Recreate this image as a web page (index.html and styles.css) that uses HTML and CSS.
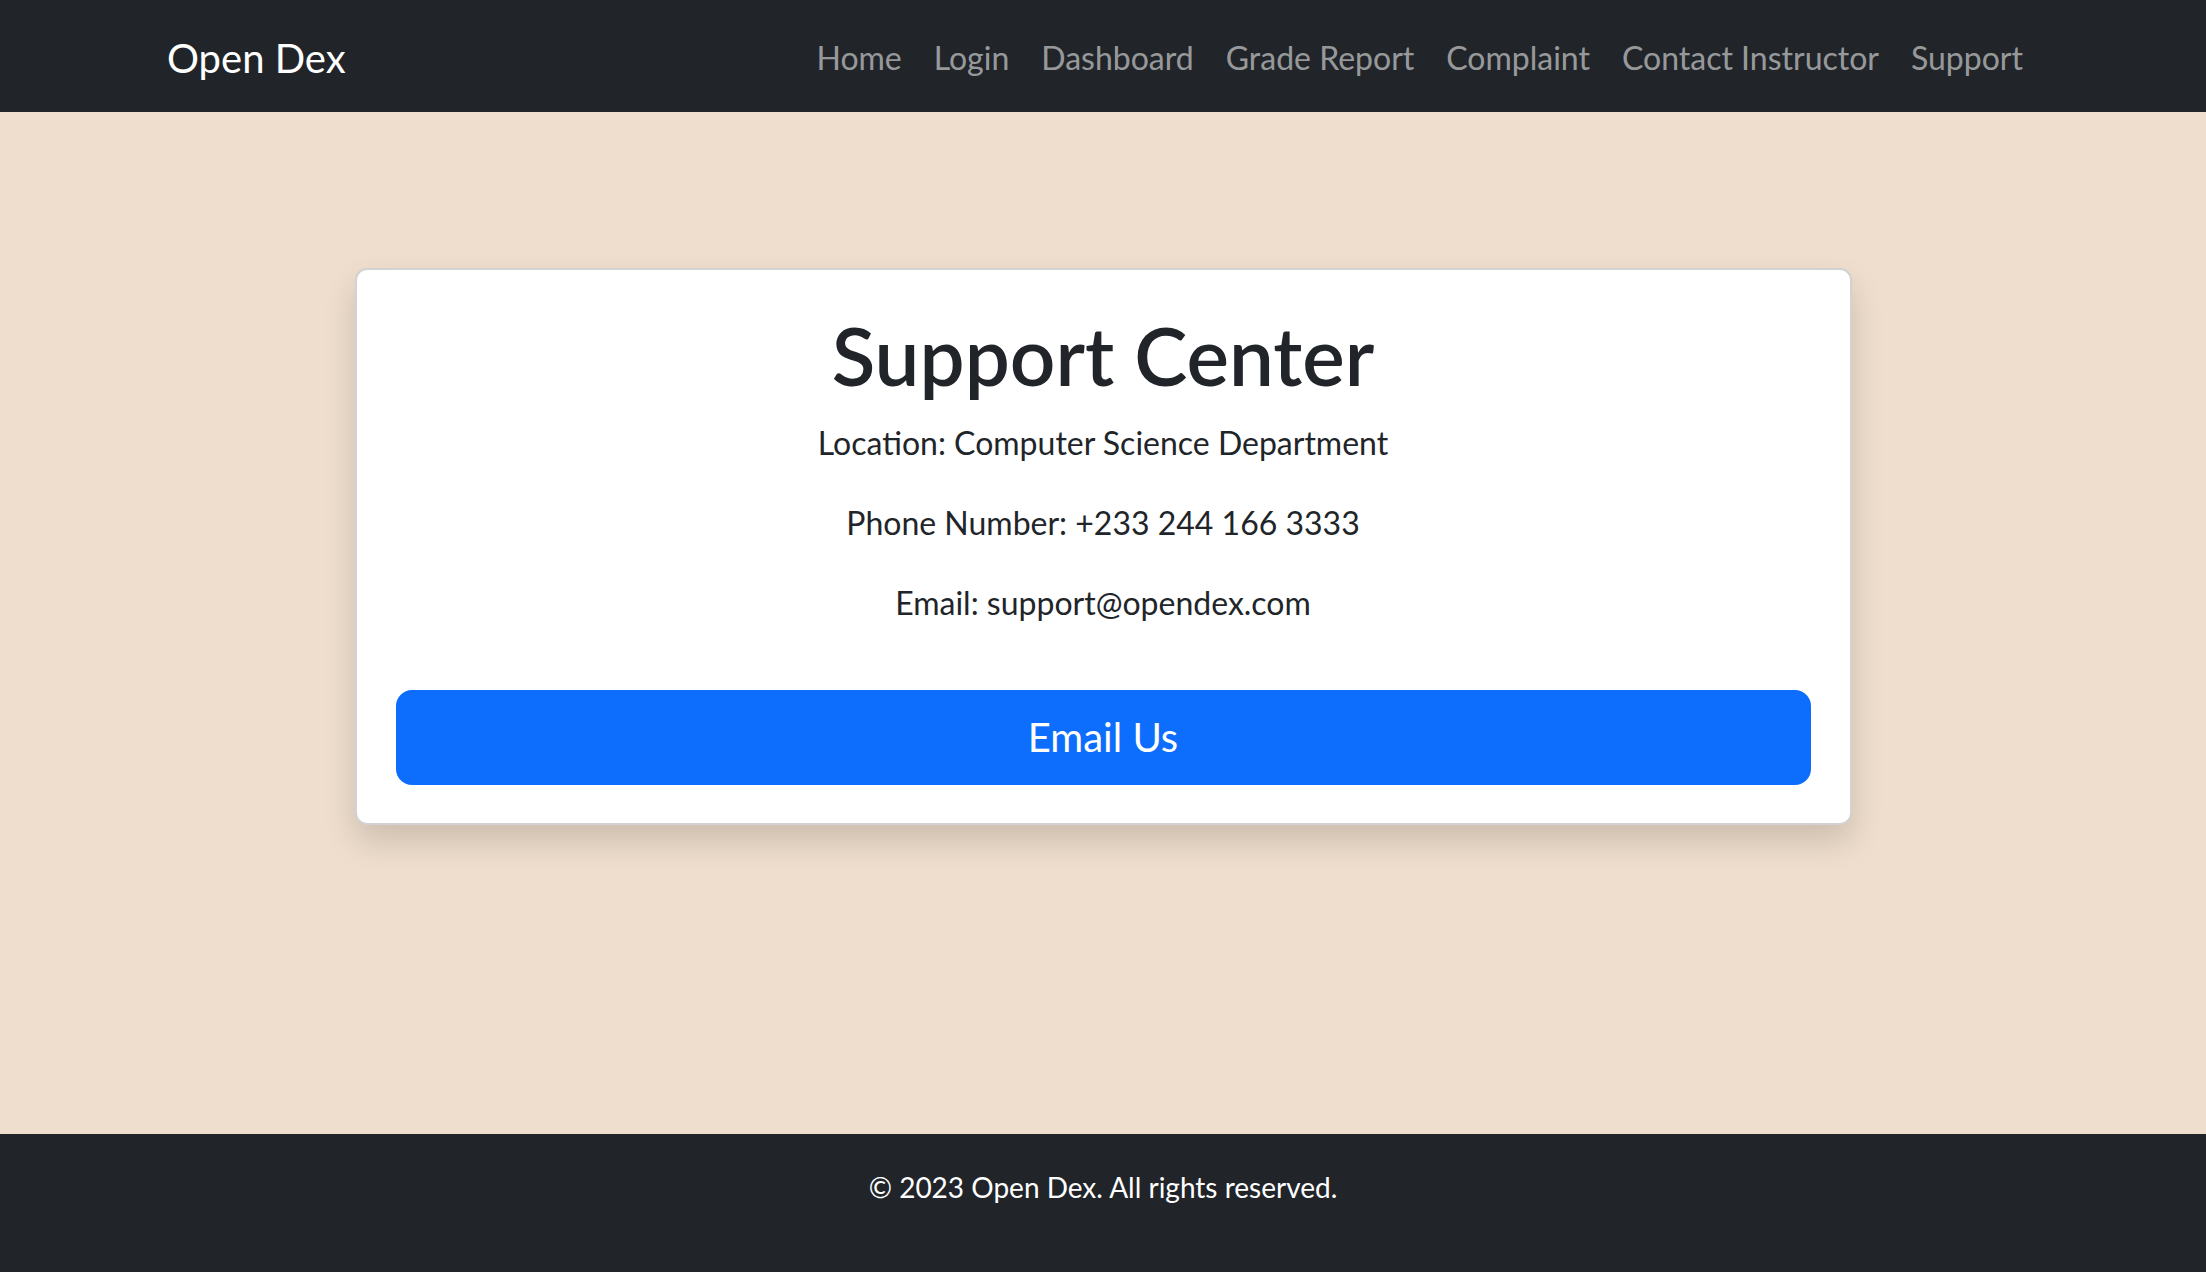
FILE: index.html
```html
<!DOCTYPE html>
<html lang="en">
<head>
<meta charset="utf-8">
<title>Support - Open Dex</title>
<link rel="stylesheet" href="styles.css">
</head>
<body>
<header class="navbar">
  <div class="nav-container">
    <a class="brand" href="#">Open Dex</a>
    <nav class="nav-links">
      <a class="nav-link" href="#">Home</a>
      <a class="nav-link" href="#">Login</a>
      <a class="nav-link" href="#">Dashboard</a>
      <a class="nav-link" href="#">Grade Report</a>
      <a class="nav-link" href="#">Complaint</a>
      <a class="nav-link" href="#">Contact Instructor</a>
      <a class="nav-link" href="#">Support</a>
    </nav>
  </div>
</header>
<main class="main">
  <section class="card">
    <h1 class="title">Support Center</h1>
    <p class="info">Location: Computer Science Department</p>
    <p class="info">Phone Number: +233 244 166 3333</p>
    <p class="info">Email: support@opendex.com</p>
    <a class="btn" href="#">Email Us</a>
  </section>
</main>
<footer class="footer">
  <p class="footer-text">© 2023 Open Dex. All rights reserved.</p>
</footer>
</body>
</html>
```

FILE: styles.css
```css
* { box-sizing: border-box; }

html, body {
  margin: 0;
  padding: 0;
}

body {
  font-family: Lato, "Open Sans", "Noto Sans", sans-serif;
  font-size: 32px;
  line-height: 1.5;
  color: #212529;
  background: #efdecd;
  min-height: 100vh;
  display: flex;
  flex-direction: column;
}

a { text-decoration: none; }

.navbar {
  background: #212529;
  height: 112px;
  display: flex;
  align-items: center;
}

.nav-container {
  width: 100%;
  padding: 3px 167px 0;
  display: flex;
  align-items: center;
  justify-content: space-between;
}

.brand {
  color: #ffffff;
  font-size: 40px;
  line-height: 60px;
  margin-top: 1px;
}

.nav-links {
  display: flex;
}

.nav-link {
  color: rgba(255, 255, 255, 0.55);
  font-size: 32px;
  line-height: 48px;
  padding: 0 16px;
}

.main {
  flex: 1;
  min-height: 1022px;
  padding-top: 156px;
}

.card {
  width: 1497px;
  margin: 0 auto;
  background: #ffffff;
  border: 2px solid rgba(0, 0, 0, 0.175);
  border-radius: 12px;
  box-shadow: 0 16px 32px rgba(0, 0, 0, 0.15);
  padding: 37px 39px 38px;
  text-align: center;
}

.title {
  margin: 0 0 16px;
  font-size: 80px;
  font-weight: 600;
  line-height: 96px;
}

.info {
  margin: 0 0 32px;
  font-size: 32px;
  line-height: 48px;
}

.btn {
  display: block;
  margin-top: 63px;
  background: #0d6efd;
  border: 2px solid #0d6efd;
  border-radius: 16px;
  color: #ffffff;
  font-size: 40px;
  line-height: 61px;
  padding: 15px 0;
  text-align: center;
}

.footer {
  background: #212529;
  color: #ffffff;
  text-align: center;
  padding: 32px 0 32px;
}

.footer-text {
  margin: 0 0 32px;
  font-size: 28px;
  line-height: 42px;
}
```
